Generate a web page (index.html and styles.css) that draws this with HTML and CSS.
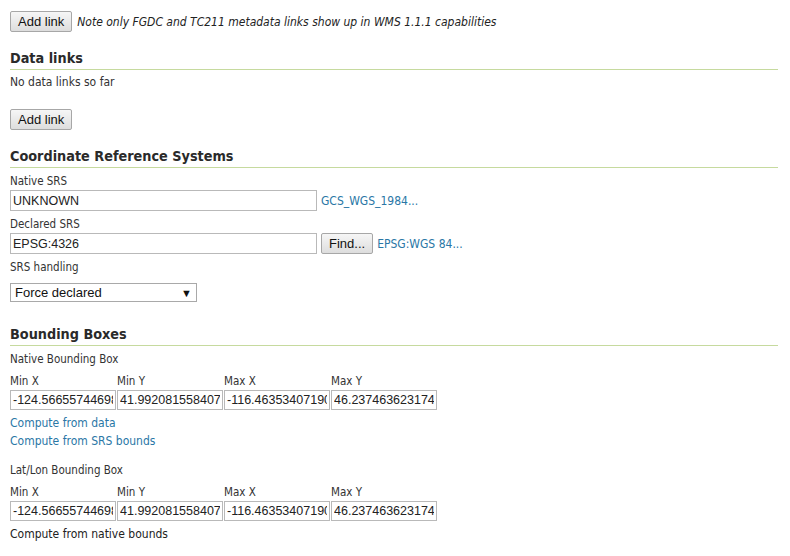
FILE: index.html
```html
<!DOCTYPE html>
<html>
<head>
<meta charset="utf-8">
<link rel="stylesheet" href="styles.css">
</head>
<body>
<div class="page">
  <div class="row top-row">
    <button class="btn">Add link</button>
    <span class="note">Note only FGDC and TC211 metadata links show up in WMS 1.1.1 capabilities</span>
  </div>

  <h3 class="heading">Data links</h3>
  <div class="text first">No data links so far</div>
  <div class="row btn-row">
    <button class="btn">Add link</button>
  </div>

  <h3 class="heading">Coordinate Reference Systems</h3>
  <div class="label first">Native SRS</div>
  <div class="row field-row">
    <input class="input wide" type="text" value="UNKNOWN">
    <a class="link">GCS_WGS_1984...</a>
  </div>
  <div class="label spaced">Declared SRS</div>
  <div class="row field-row">
    <input class="input wide" type="text" value="EPSG:4326">
    <button class="btn small">Find...</button>
    <a class="link">EPSG:WGS 84...</a>
  </div>
  <div class="label spaced">SRS handling</div>
  <div class="select">
    <span>Force declared</span>
    <span class="arrow">&#9660;</span>
  </div>

  <h3 class="heading after-select">Bounding Boxes</h3>
  <div class="label first">Native Bounding Box</div>
  <div class="bbox">
    <div class="label">Min X</div>
    <div class="label">Min Y</div>
    <div class="label">Max X</div>
    <div class="label">Max Y</div>
    <input class="input" type="text" value="-124.56655744698">
    <input class="input" type="text" value="41.992081558407">
    <input class="input" type="text" value="-116.46353407190">
    <input class="input" type="text" value="46.237463623174">
  </div>
  <div class="links">
    <a class="link">Compute from data</a>
    <a class="link">Compute from SRS bounds</a>
  </div>

  <div class="label group">Lat/Lon Bounding Box</div>
  <div class="bbox">
    <div class="label">Min X</div>
    <div class="label">Min Y</div>
    <div class="label">Max X</div>
    <div class="label">Max Y</div>
    <input class="input" type="text" value="-124.56655744698">
    <input class="input" type="text" value="41.992081558407">
    <input class="input" type="text" value="-116.46353407190">
    <input class="input" type="text" value="46.237463623174">
  </div>
  <div class="links">
    <span class="plain">Compute from native bounds</span>
  </div>
</div>
</body>
</html>
```

FILE: styles.css
```css
html, body {
  margin: 0;
  padding: 0;
  background: #ffffff;
}

.page {
  width: 768px;
  padding: 11px 0 0 10px;
  font-family: "DejaVu Sans Condensed", "DejaVu Sans", sans-serif;
  font-size: 12px;
  color: #333333;
}

.row {
  display: flex;
  align-items: center;
}

.top-row {
  height: 21px;
}

.btn {
  height: 21px;
  padding: 0 7px;
  margin: 0;
  font-family: "Liberation Sans", Arial, sans-serif;
  font-size: 13px;
  color: #111111;
  background: linear-gradient(#f6f6f6, #dddddd);
  border: 1px solid #a7a7a7;
  border-radius: 2px;
}

.btn.small {
  margin-left: 4px;
}

.note {
  margin-left: 5px;
  font-style: italic;
  color: #222222;
}

.heading {
  margin: 17px 0 0 0;
  padding-top: 1px;
  font-size: 14.3px;
  line-height: 17px;
  font-weight: bold;
  color: #2a2a2a;
  padding-bottom: 2px;
  border-bottom: 1px solid #c6da9e;
}

.heading.after-select {
  margin-top: 23px;
}

.text {
  line-height: 18px;
}

.label {
  font-size: 11.5px;
  line-height: 17px;
  padding-top: 1px;
}

.text.first {
  margin-top: 3px;
}

.label.first {
  margin-top: 4px;
}

.btn-row {
  margin-top: 18px;
}

.field-row {
  height: 21px;
}

.spaced {
  margin-top: 4px;
}

.input {
  box-sizing: border-box;
  height: 21px;
  margin: 0;
  padding: 0 2px;
  font-family: "Liberation Sans", Arial, sans-serif;
  font-size: 12.5px;
  color: #222222;
  border: 1px solid #b9b9b9;
  background: #ffffff;
}

.input.wide {
  width: 307px;
}

.link {
  margin-left: 4px;
  color: #2a77a6;
  text-decoration: none;
}

.select {
  box-sizing: border-box;
  width: 187px;
  height: 19px;
  margin-top: 7px;
  padding: 0 4px 0 4px;
  display: flex;
  align-items: center;
  justify-content: space-between;
  border: 1px solid #a9a9a9;
  font-family: "Liberation Sans", Arial, sans-serif;
  font-size: 13px;
  color: #111111;
}

.select .arrow {
  font-size: 11px;
}

.bbox {
  display: grid;
  grid-template-columns: repeat(4, 107px);
  margin-top: 4px;
}

.bbox .input {
  width: 106px;
  height: 20px;
}

.links {
  display: flex;
  flex-direction: column;
  margin-top: 4px;
}

.links .link, .links .plain {
  margin-left: 0;
  line-height: 18px;
}

.plain {
  color: #222222;
}

.label.group {
  margin-top: 11px;
}
```
